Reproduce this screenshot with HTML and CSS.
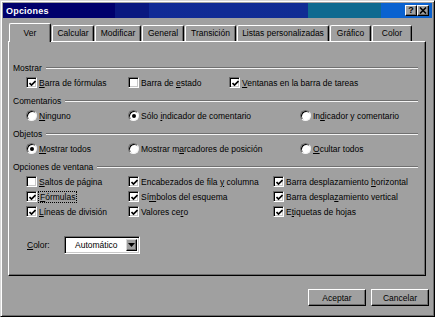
FILE: index.html
```html
<!DOCTYPE html>
<html lang="es">
<head>
    <meta charset="UTF-8">
    <title>Opciones</title>
    <link rel="stylesheet" href="styles.css">
</head>
<body>
    <div class="window">
        <div class="titlebar">
            <span class="title">Opciones</span>
            <div class="title-btns">
                <span class="tbtn help">?</span>
                <span class="tbtn">
                    <svg width="8" height="7" viewBox="0 0 8 7"><path d="M1 0.5 L7 6.5 M7 0.5 L1 6.5" stroke="#000" stroke-width="1.6"/></svg>
                </span>
            </div>
        </div>

        <div class="tabs">
            <div class="tab active">Ver</div>
            <div class="tab">Calcular</div>
            <div class="tab">Modificar</div>
            <div class="tab">General</div>
            <div class="tab">Transición</div>
            <div class="tab">Listas personalizadas</div>
            <div class="tab">Gráfico</div>
            <div class="tab">Color</div>
        </div>

        <div class="panel">
            <div class="group">
                <div class="group-head"><span>Mostrar</span><i class="rule"></i></div>
                <div class="opts opts-show">
                    <div class="opt"><span class="check"><svg class="tick" viewBox="0 0 7 7"><path d="M0.5 3 L2.5 5 L6.5 1"/></svg></span><span><u>B</u>arra de fórmulas</span></div>
                    <div class="opt"><span class="check"></span><span>Barra de <u>e</u>stado</span></div>
                    <div class="opt"><span class="check"><svg class="tick" viewBox="0 0 7 7"><path d="M0.5 3 L2.5 5 L6.5 1"/></svg></span><span><u>V</u>entanas en la barra de tareas</span></div>
                </div>
            </div>

            <div class="group">
                <div class="group-head"><span>Comentarios</span><i class="rule"></i></div>
                <div class="opts opts-radio">
                    <div class="opt"><span class="radio"></span><span><u>N</u>inguno</span></div>
                    <div class="opt"><span class="radio on"></span><span>Sólo <u>i</u>ndicador de comentario</span></div>
                    <div class="opt"><span class="radio"></span><span>In<u>d</u>icador y comentario</span></div>
                </div>
            </div>

            <div class="group">
                <div class="group-head"><span>Objetos</span><i class="rule"></i></div>
                <div class="opts opts-radio">
                    <div class="opt"><span class="radio on"></span><span><u>M</u>ostrar todos</span></div>
                    <div class="opt"><span class="radio"></span><span>Mostrar m<u>a</u>rcadores de posición</span></div>
                    <div class="opt"><span class="radio"></span><span><u>O</u>cultar todos</span></div>
                </div>
            </div>

            <div class="group">
                <div class="group-head"><span>Opciones de ventana</span><i class="rule"></i></div>
                <div class="opts opts-window">
                    <div class="opt"><span class="check"></span><span><u>S</u>altos de página</span></div>
                    <div class="opt"><span class="check"><svg class="tick" viewBox="0 0 7 7"><path d="M0.5 3 L2.5 5 L6.5 1"/></svg></span><span>Encabezados de fila <u>y</u> columna</span></div>
                    <div class="opt"><span class="check"><svg class="tick" viewBox="0 0 7 7"><path d="M0.5 3 L2.5 5 L6.5 1"/></svg></span><span>Barra desplazamiento <u>h</u>orizontal</span></div>

                    <div class="opt"><span class="check"><svg class="tick" viewBox="0 0 7 7"><path d="M0.5 3 L2.5 5 L6.5 1"/></svg></span><span class="focus"><u>F</u>órmulas</span></div>
                    <div class="opt"><span class="check"><svg class="tick" viewBox="0 0 7 7"><path d="M0.5 3 L2.5 5 L6.5 1"/></svg></span><span>Sí<u>m</u>bolos del esquema</span></div>
                    <div class="opt"><span class="check"><svg class="tick" viewBox="0 0 7 7"><path d="M0.5 3 L2.5 5 L6.5 1"/></svg></span><span>Barra despla<u>z</u>amiento vertical</span></div>

                    <div class="opt"><span class="check"><svg class="tick" viewBox="0 0 7 7"><path d="M0.5 3 L2.5 5 L6.5 1"/></svg></span><span><u>L</u>íneas de división</span></div>
                    <div class="opt"><span class="check"><svg class="tick" viewBox="0 0 7 7"><path d="M0.5 3 L2.5 5 L6.5 1"/></svg></span><span>Valores ce<u>r</u>o</span></div>
                    <div class="opt"><span class="check"><svg class="tick" viewBox="0 0 7 7"><path d="M0.5 3 L2.5 5 L6.5 1"/></svg></span><span>E<u>t</u>iquetas de hojas</span></div>
                </div>
            </div>

            <div class="color-row">
                <span class="color-label"><u>C</u>olor:</span>
                <div class="combo">
                    <span class="combo-value">Automático</span>
                    <span class="combo-btn">
                        <svg width="7" height="4" viewBox="0 0 7 4"><path d="M0 0 H7 L3.5 4 Z" fill="#000"/></svg>
                    </span>
                </div>
            </div>
        </div>

        <div class="footer">
            <button class="btn">Aceptar</button>
            <button class="btn">Cancelar</button>
        </div>
    </div>
</body>
</html>
```
FILE: styles.css
```css
* {
    box-sizing: border-box;
}

body {
    margin: 0;
    font-family: "Liberation Sans", Arial, sans-serif;
    font-size: 8.5px;
    color: #000;
    background: #a0a0a0;
}

u {
    text-decoration-thickness: 1px;
    text-underline-offset: 1px;
}

.window {
    display: flex;
    flex-direction: column;
    width: 435px;
    height: 317px;
    padding: 2px;
    background: #a0a0a0;
    border: 1px solid;
    border-color: #d8d8d8 #000 #000 #d8d8d8;
    box-shadow: inset 1px 1px 0 #fff, inset -1px -1px 0 #6c6c6c;
}

/* title bar */
.titlebar {
    display: flex;
    align-items: center;
    justify-content: space-between;
    height: 15px;
    padding: 0 3px 0 3px;
    background: linear-gradient(90deg,
        #00006c 0%, #00006c 26%,
        #0a1880 26%, #0a1880 34%,
        #102a96 34%, #102c94 71%,
        #0e6a90 71%, #0e6a90 88%,
        #0a62d0 88%, #0a62d0 100%);
}

.title {
    color: #fff;
    font-weight: bold;
    font-size: 9px;
    letter-spacing: 0.2px;
}

.title-btns {
    display: flex;
}

.tbtn {
    display: flex;
    align-items: center;
    justify-content: center;
    width: 12px;
    height: 11px;
    background: #a0a0a0;
    border: 1px solid;
    border-color: #fff #000 #000 #fff;
    box-shadow: inset -1px -1px 0 #6c6c6c;
}

.help {
    font-weight: bold;
    font-size: 9px;
    line-height: 9px;
}

/* tabs */
.tabs {
    display: flex;
    align-items: flex-end;
    gap: 1px;
    height: 18px;
    margin-top: 5px;
    padding-left: 6px;
    position: relative;
    z-index: 1;
}

.tab {
    flex: none;
    height: 16px;
    line-height: 14px;
    text-align: center;
    white-space: nowrap;
    background: #a0a0a0;
    border-top: 1px solid #fff;
    border-left: 1px solid #fff;
    border-right: 1px solid #000;
    border-radius: 2px 2px 0 0;
    box-shadow: inset -1px 0 0 #6c6c6c;
}

.tab:nth-child(1) { width: 42px; }
.tab:nth-child(2) { width: 42px; }
.tab:nth-child(3) { width: 46px; }
.tab:nth-child(4) { width: 42px; }
.tab:nth-child(5) { width: 51px; }
.tab:nth-child(6) { width: 92px; }
.tab:nth-child(7) { width: 41px; }
.tab:nth-child(8) { width: 40px; }

.tab.active {
    height: 19px;
    margin-bottom: -1px;
    line-height: 18px;
}

/* panel */
.panel {
    height: 235px;
    margin: 0 6px 0 5px;
    padding: 18px 7px 0 4px;
    border: 1px solid;
    border-color: #fff #000 #000 #fff;
    box-shadow: inset -1px -1px 0 #6c6c6c;
}

.group {
    margin-bottom: 3px;
}

.group-head {
    display: flex;
    align-items: center;
    gap: 4px;
    height: 15px;
}

.rule {
    flex: 1;
    height: 2px;
    border-top: 1px solid #707070;
    border-bottom: 1px solid #f4f4f4;
}

.opts {
    display: grid;
    grid-auto-rows: 15px;
    padding-left: 13px;
}

.opts-show { grid-template-columns: 102px 101px 1fr; }
.opts-radio { grid-template-columns: 102px 172px 1fr; }
.opts-window { grid-template-columns: 102px 145px 1fr; }

.opt {
    display: flex;
    align-items: center;
    gap: 2px;
    white-space: nowrap;
}

.check {
    display: flex;
    align-items: center;
    justify-content: center;
    flex: none;
    width: 11px;
    height: 11px;
    background: #fff;
    border: 1px solid;
    border-color: #6c6c6c #fff #fff #6c6c6c;
    box-shadow: inset 1px 1px 0 #000, inset -1px -1px 0 #c8c8c8;
}

.tick {
    width: 7px;
    height: 7px;
    margin: 1px 0 0 1px;
    fill: none;
    stroke: #000;
    stroke-width: 1.7;
}

.radio {
    position: relative;
    flex: none;
    width: 11px;
    height: 11px;
    border-radius: 50%;
    background: #fff;
    border: 1px solid;
    border-color: #6c6c6c #f4f4f4 #f4f4f4 #6c6c6c;
    box-shadow: inset 1px 1px 0 #000;
}

.radio.on::after {
    content: "";
    position: absolute;
    left: 2.5px;
    top: 2.5px;
    width: 4px;
    height: 4px;
    border-radius: 50%;
    background: #000;
}

.focus {
    outline: 1px dotted #000;
    outline-offset: 0;
    padding: 0 1px;
}

/* color */
.color-row {
    display: flex;
    align-items: center;
    height: 18px;
    margin-top: 17px;
    padding-left: 14px;
}

.color-label {
    width: 37px;
}

.combo {
    display: flex;
    align-items: center;
    width: 76px;
    height: 18px;
    padding: 2px;
    background: #fff;
    border: 1px solid;
    border-color: #6c6c6c #fff #fff #6c6c6c;
    box-shadow: inset 1px 1px 0 #000, inset -1px -1px 0 #c8c8c8;
}

.combo-value {
    flex: 1;
    padding-left: 8px;
}

.combo-btn {
    display: flex;
    align-items: center;
    justify-content: center;
    width: 11px;
    height: 12px;
    background: #a0a0a0;
    border: 1px solid;
    border-color: #d8d8d8 #000 #000 #d8d8d8;
    box-shadow: inset -1px -1px 0 #6c6c6c;
}

/* buttons */
.footer {
    display: flex;
    justify-content: flex-end;
    gap: 5px;
    margin-top: 13px;
    padding-right: 3px;
}

.btn {
    width: 58px;
    height: 17px;
    padding: 0;
    font-family: inherit;
    font-size: 8.5px;
    color: #000;
    background: #a0a0a0;
    border: 1px solid;
    border-color: #fff #000 #000 #fff;
    box-shadow: inset -1px -1px 0 #6c6c6c;
}
```
